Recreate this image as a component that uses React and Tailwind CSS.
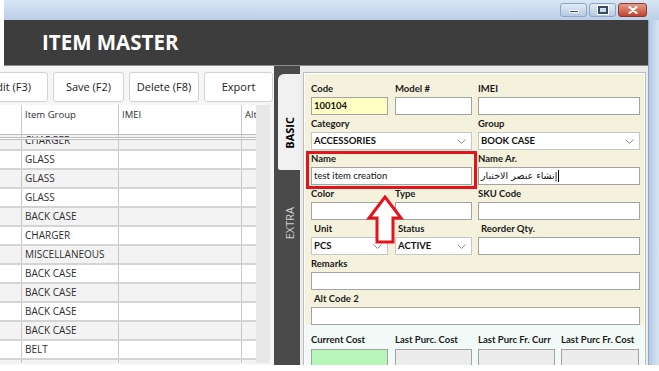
import React from "react";

const rows = [
  "CHARGER",
  "GLASS",
  "GLASS",
  "GLASS",
  "BACK CASE",
  "CHARGER",
  "MISCELLANEOUS",
  "BACK CASE",
  "BACK CASE",
  "BACK CASE",
  "BACK CASE",
  "BELT",
  "",
];

function Chevron() {
  return (
    <svg width="9" height="5" viewBox="0 0 9 5" className="shrink-0">
      <path d="M0.5 0.5 L4.5 4.5 L8.5 0.5" fill="none" stroke="#8c8c8c" strokeWidth="1" />
    </svg>
  );
}

function Label({ children, className = "" }) {
  return (
    <div className={`h-[16px] leading-[16px] text-[9.5px] font-bold text-[#1a1a1a] ${className}`}>
      {children}
    </div>
  );
}

function Box({ children, className = "bg-white", bold }) {
  return (
    <div
      className={`h-[18px] border border-[#a3a3a3] flex items-center px-[2px] text-[9.5px] text-[#111] ${
        bold ? "font-bold" : ""
      } ${className}`}
    >
      {children}
    </div>
  );
}

function Select({ value }) {
  return (
    <div className="h-[18px] border border-[#c6c6c6] bg-white flex items-center justify-between pl-[2px] pr-[5px] text-[9.5px] font-bold text-[#111]">
      <span>{value}</span>
      <Chevron />
    </div>
  );
}

function Field({ label, children, span = "", labelClass = "" }) {
  return (
    <div className={`flex flex-col ${span}`}>
      <Label className={labelClass}>{label}</Label>
      {children}
    </div>
  );
}

function Btn({ children, className = "justify-center" }) {
  return (
    <div
      className={`h-[30px] shrink-0 bg-white border border-[#d3d3d3] rounded-[3px] flex items-center text-[11px] text-[#222] whitespace-nowrap ${className}`}
    >
      {children}
    </div>
  );
}

export default function App() {
  return (
    <div
      className="w-[659px] h-[371px] bg-white overflow-hidden"
      style={{ fontFamily: "'Open Sans', 'Liberation Sans', sans-serif" }}
    >
      {/* title bar */}
      <div className="ml-[4px] h-[20px] bg-gradient-to-b from-[#d8e6f5] to-[#bccfe8] flex justify-end items-start pt-[3px] pr-[12px] gap-[2px]">
        <div className="w-[27px] h-[14px] rounded-[3px] border border-[#8ea5c3] bg-gradient-to-b from-[#e3ecf7] to-[#b5c9e3] flex items-end justify-center pb-[3px]">
          <div className="w-[10px] h-[3px] bg-[#3b4a5e] border border-white" />
        </div>
        <div className="w-[27px] h-[14px] rounded-[3px] border border-[#8ea5c3] bg-gradient-to-b from-[#e3ecf7] to-[#b5c9e3] flex items-center justify-center">
          <div className="w-[10px] h-[8px] border-2 border-[#3b4a5e] outline outline-1 outline-white" />
        </div>
        <div className="w-[29px] h-[14px] rounded-[3px] border border-[#8e3b2f] bg-gradient-to-b from-[#e69a8a] to-[#c2412c] flex items-center justify-center">
          <svg width="10" height="8" viewBox="0 0 10 8">
            <path d="M1.5 1 L8.5 7 M8.5 1 L1.5 7" stroke="#ffffff" strokeWidth="2.2" strokeLinecap="round" />
          </svg>
        </div>
      </div>

      <div className="flex h-[345px]">
        <div className="flex-1 flex flex-col min-w-0">
          {/* header */}
          <div className="ml-[4px] h-[46px] shrink-0 bg-[#3d3d3d] border-b border-[#8a8a8a] flex items-center pl-[38px]">
            <span className="text-white text-[20.5px] font-bold">ITEM MASTER</span>
          </div>

          {/* body */}
          <div className="flex flex-1 min-h-0">
            {/* left list */}
            <div className="w-[274px] shrink-0 bg-[#f6f6f6] flex flex-col overflow-hidden">
              <div className="flex gap-[5px] mt-[6px] ml-[-25px]">
                <Btn className="w-[73px] justify-end pr-[16px]">Edit (F3)</Btn>
                <Btn className="w-[71px] justify-center">Save (F2)</Btn>
                <Btn className="w-[70px] justify-center">Delete (F8)</Btn>
                <Btn className="w-[69px] justify-center">Export</Btn>
              </div>

              <div className="flex mt-[3px] h-[258px]">
                <div className="w-[256px] bg-white flex flex-col text-[10px] text-[#2e2e2e]">
                  <div className="h-[30px] flex border-b border-[#bdbdbd] shrink-0 text-[9.5px]">
                    <div className="w-[22px] border-r border-[#c8c8c8]" />
                    <div className="w-[97px] border-r border-[#c8c8c8] pl-[3px] pt-[3px]">Item Group</div>
                    <div className="w-[123px] border-r border-[#c8c8c8] pl-[3px] pt-[3px]">IMEI</div>
                    <div className="w-[14px] pl-[3px] pt-[3px] overflow-hidden whitespace-nowrap">Alt</div>
                  </div>
                  <div className="relative flex-1 overflow-hidden">
                    <div className="mt-[-3px]">
                      {rows.map((r, i) => (
                        <div
                          key={i}
                          className={`h-[19px] flex border-b-2 border-[#d4d4d4] ${
                            i % 2 === 0 ? "bg-[#f3f3f3]" : "bg-white"
                          }`}
                        >
                          <div className="w-[22px] border-r border-[#c8c8c8]" />
                          <div className="w-[97px] border-r border-[#c8c8c8] pl-[3px] flex items-center whitespace-nowrap overflow-hidden">
                            {r}
                          </div>
                          <div className="w-[123px] border-r border-[#c8c8c8]" />
                          <div className="w-[14px]" />
                        </div>
                      ))}
                    </div>
                    <div className="absolute left-0 right-0 top-[2px] h-[3px] border-y border-[#bdbdbd] bg-white" />
                  </div>
                </div>
                <div className="w-[14px] bg-[#e8e8e8]" />
              </div>
            </div>

            {/* tab strip */}
            <div className="w-[26px] shrink-0 bg-[#4a4a4a] flex flex-col items-end">
              <div className="mt-[8px] w-[22px] h-[96px] bg-[#f1f1f1] rounded-tl-[6px] rounded-bl-[2px] flex flex-col items-center pt-[43px]">
                <span className="[writing-mode:vertical-rl] rotate-180 text-[11px] font-bold text-black leading-none">
                  BASIC
                </span>
              </div>
              <div className="w-[22px] flex flex-col items-center pt-[37px]">
                <span className="[writing-mode:vertical-rl] rotate-180 text-[11px] text-[#cfcfcf] leading-none">
                  EXTRA
                </span>
              </div>
            </div>

            {/* right form */}
            <div className="flex-1 bg-[#ececec] pt-[6px] pl-[3px] pr-[2px] overflow-hidden">
              <div
                className="border border-[#bdbdbd] bg-white p-[1px] h-[320px] flex flex-col"
                style={{ fontFamily: "Lato, 'Open Sans', sans-serif" }}
              >
                <div className="relative h-[251px] shrink-0 bg-[#f4f2dc] overflow-hidden pl-[6px] pt-[7px]">
                  <div className="grid grid-cols-[78px_77px_162px] gap-x-[6px] gap-y-[1px]">
                    <Field label="Code">
                      <Box className="bg-[#ffffc4] w-[77px]" bold>100104</Box>
                    </Field>
                    <Field label="Model #">
                      <Box />
                    </Field>
                    <Field label="IMEI">
                      <Box />
                    </Field>

                    <Field label="Category" span="col-span-2">
                      <Select value="ACCESSORIES" />
                    </Field>
                    <Field label="Group">
                      <Select value="BOOK CASE" />
                    </Field>

                    <Field label="Name" span="col-span-2">
                      <Box>test item creation</Box>
                    </Field>
                    <Field label="Name Ar.">
                      <Box>
                        <span dir="rtl" className="text-[9.5px]" style={{ fontFamily: "'DejaVu Sans', sans-serif" }}>
                          إنشاء عنصر الاختبار
                        </span>
                        <span className="w-[1px] h-[12px] bg-black ml-[1px]" />
                      </Box>
                    </Field>

                    <Field label="Color">
                      <Box className="bg-white w-[77px]" />
                    </Field>
                    <Field label="Type">
                      <Box />
                    </Field>
                    <Field label="SKU Code">
                      <Box />
                    </Field>

                    <Field label="Unit" labelClass="pl-[3px]">
                      <div className="w-[77px]">
                        <Select value="PCS" />
                      </div>
                    </Field>
                    <Field label="Status" labelClass="pl-[3px]">
                      <Select value="ACTIVE" />
                    </Field>
                    <Field label="Reorder Qty." labelClass="pl-[3px]">
                      <Box />
                    </Field>

                    <Field label="Remarks" span="col-span-3">
                      <Box />
                    </Field>
                    <Field label="Alt Code 2" span="col-span-3" labelClass="pl-[3px]">
                      <Box />
                    </Field>
                  </div>

                  {/* highlight box */}
                  <div className="absolute left-[1px] top-[77px] w-[171px] h-[38px] border-[3px] border-[#e3141c]" />

                  {/* arrow */}
                  <svg
                    className="absolute left-[61px] top-[121px]"
                    width="40"
                    height="50"
                    viewBox="0 0 40 50"
                  >
                    <path
                      d="M19 2 L35 23 L27 23 L27 47 L11 47 L11 23 L3 23 Z"
                      fill="#ffffff"
                      stroke="#e3141c"
                      strokeWidth="3"
                      strokeLinejoin="miter"
                    />
                  </svg>
                </div>

                <div className="flex-1 bg-[#f1faf6] pl-[6px] pt-[8px] flex gap-[6px]">
                  {[
                    ["Current Cost", "bg-[#b8f5b8]", "w-[77px]", "mr-[1px]"],
                    ["Last Purc. Cost", "bg-[#ececec]", "w-[77px]", ""],
                    ["Last Purc Fr. Curr", "bg-[#ececec]", "w-[77px]", ""],
                    ["Last Purc Fr. Cost", "bg-[#ececec]", "w-[78px]", ""],
                  ].map(([l, bg, w, m]) => (
                    <div key={l} className={`flex flex-col ${w} ${m}`}>
                      <div className="h-[14px] leading-[14px] text-[9.5px] font-bold text-[#1a1a1a] whitespace-nowrap">
                        {l}
                      </div>
                      <div className={`mt-[2px] h-[18px] border border-[#a3a3a3] ${bg}`} />
                    </div>
                  ))}
                </div>
              </div>
            </div>
          </div>
        </div>

        {/* window frame right */}
        <div className="w-[11px] shrink-0 bg-gradient-to-r from-[#b2cae6] to-[#d8e5f3] border-l border-[#8fa8c6]" />
      </div>
    </div>
  );
}
